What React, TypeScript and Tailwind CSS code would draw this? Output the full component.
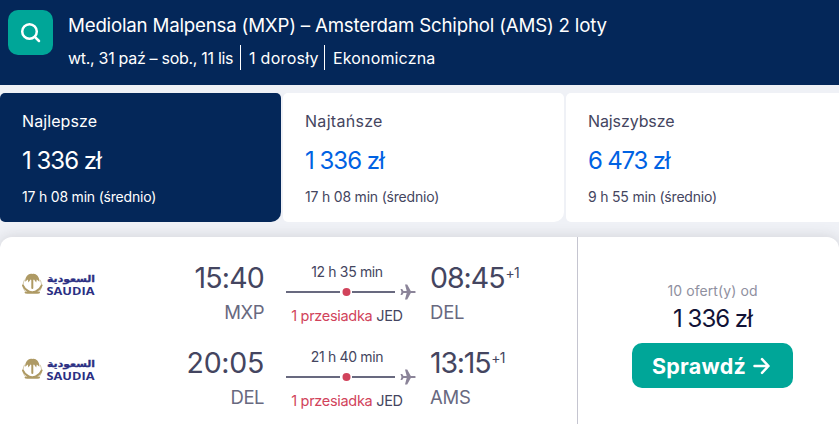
import React from "react";

type Tab = {
  label: string;
  price: string;
  duration: string;
  active?: boolean;
  labelClass: string;
  priceClass: string;
};

const tabs: Tab[] = [
  { label: "Najlepsze", price: "1 336 zł", duration: "17 h 08 min (średnio)", active: true, labelClass: "tracking-[0.1px]", priceClass: "tracking-[-1px]" },
  { label: "Najtańsze", price: "1 336 zł", duration: "17 h 08 min (średnio)", labelClass: "tracking-[0.3px]", priceClass: "tracking-[-1px]" },
  { label: "Najszybsze", price: "6 473 zł", duration: "9 h 55 min (średnio)", labelClass: "tracking-[-0.1px]", priceClass: "tracking-[-1.2px]" },
];

const legs = [
  { from: "MXP", to: "DEL", depart: "15:40", arrive: "08:45", duration: "12 h 35 min", departClass: "tracking-[-0.8px]", arriveClass: "tracking-[-1px]" },
  { from: "DEL", to: "AMS", depart: "20:05", arrive: "13:15", duration: "21 h 40 min", departClass: "tracking-[-0.3px]", arriveClass: "tracking-[-1.2px]" },
];

function SaudiaLogo() {
  return (
    <svg width="76" height="26" viewBox="0 0 76 26" className="block">
      <g fill="none" stroke="#ae9a64" strokeLinecap="round">
        <path d="M2.500 8C.5 11.500.5 16 3 19M18.100 8C20.100 11.500 20.100 16 17.600 19" strokeWidth="0.900" opacity="0.6" />
        <path d="M1 13.500C3 18.500 9 22 17 20.500M19.600 13.500C17.600 18.500 11.600 22 3.600 20.500" strokeWidth="2" />
        <path d="M10.300 8v8" strokeWidth="2" />
      </g>
      <path d="M10.300 2C13 .8 17.500 3.500 17.400 9.800L14.800 7.500 14.200 10.500 12 7.500 10.300 8.600 8.600 7.500 6.400 10.500 5.800 7.500 3.200 9.800C3.100 3.500 7.600.8 10.300 2Z" fill="#ae9a64" />
      <g fill="#2b2f83" fontWeight="700">
        <text x="25" y="9.500" fontSize="9.500" textLength="48" lengthAdjust="spacingAndGlyphs" fontFamily="'DejaVu Sans', sans-serif" direction="ltr" stroke="#2b2f83" strokeWidth="0.300">السعودية</text>
        <text x="24.500" y="22.500" fontSize="11" textLength="48" lengthAdjust="spacingAndGlyphs" fontFamily="'Open Sans', sans-serif">SAUDIA</text>
      </g>
    </svg>
  );
}

function Plane() {
  return (
    <svg width="16" height="16" viewBox="0 0 16 16" fill="#8b8499" className="block">
      <path d="M15.700 8c0 .6-.5 1.100-1.200 1.100h-3.700L7.200 15.400H5L6.700 9.100H3.500L2.200 10.900H.5L1.500 8 .5 5.100H2.200L3.500 6.900H6.700L5 .6H7.200L10.800 6.900h3.700c.7 0 1.200.5 1.200 1.100z" />
    </svg>
  );
}

function Leg({ leg }: { leg: (typeof legs)[number] }) {
  return (
    <div className="flex h-[85px]">
      <div className="w-[76px] pt-[11px]"><SaudiaLogo /></div>
      <div className="flex w-[166px] flex-col items-end">
        <span className={`text-[28.5px] leading-[34px] text-[#444560] ${leg.departClass}`}>{leg.depart}</span>
        <span className="mt-[4px] text-[18.5px] leading-[26px] tracking-[-0.5px] text-[#68697f]">{leg.from}</span>
      </div>
      <div className="ml-[22px] flex w-[130px] flex-col">
        <span className="w-[122px] pt-[1px] text-center text-[14px] leading-[20px] tracking-[-0.35px] text-[#444560]">{leg.duration}</span>
        <div className="mt-[2px] flex h-[16px] items-center">
          <span className="h-[2px] w-[55px] bg-[#68697f]" />
          <span className="mx-[2px] flex w-[8px] justify-center"><span className="size-[8px] shrink-0 translate-x-[0.5px] rounded-full bg-[#d1435b]" /></span>
          <span className="h-[2px] w-[43px] bg-[#68697f]" />
          <span className="ml-[5px]"><Plane /></span>
        </div>
        <span className="mt-[6px] w-[122px] whitespace-nowrap text-center text-[14.5px] leading-[20px] tracking-[-0.3px] text-[#444560]">
          <span className="text-[#d1435b]">1 przesiadka</span> JED
        </span>
      </div>
      <div className="ml-[14px] flex flex-col">
        <span className={`flex text-[28.5px] leading-[34px] text-[#444560] ${leg.arriveClass}`}>
          {leg.arrive}
          <span className="pl-[1px] pt-[2px] text-[14px] leading-[20px] tracking-[-0.9px]">+1</span>
        </span>
        <span className="mt-[4px] text-[18.5px] leading-[26px] tracking-[-0.2px] text-[#68697f]">{leg.to}</span>
      </div>
    </div>
  );
}

export default function App() {
  return (
    <div className="h-[424px] w-[839px] overflow-hidden bg-[#eff1f6] font-['Inter',sans-serif]">
      <header className="flex h-[85px] bg-[#042759] pl-[8px] text-white">
        <button className="mt-[10px] flex size-[45px] shrink-0 items-center justify-center rounded-[10px] bg-[#00a698]">
          <svg width="22" height="22" viewBox="0 0 22 22" fill="none" stroke="currentColor" strokeWidth="2.500" strokeLinecap="round">
            <circle cx="9.500" cy="9.500" r="7.300" />
            <path d="M14.800 14.800 19 19" />
          </svg>
        </button>
        <div className="ml-[15px] flex flex-col items-start whitespace-nowrap">
          <h1 className="mt-[13px] text-[18.7px] leading-[26px] tracking-[-0.2px]">Mediolan Malpensa (MXP) – Amsterdam Schiphol (AMS) 2 loty</h1>
          <div className="mt-[6px] flex h-[25px] text-[16px] leading-[27px]">
            <span className="w-[173px] border-r border-white tracking-[-0.3px]">wt., 31 paź – sob., 11 lis</span>
            <span className="w-[84px] border-r border-white pl-[8px] tracking-[0.3px]">1 dorosły</span>
            <span className="pl-[8px] tracking-[0.15px]">Ekonomiczna</span>
          </div>
        </div>
      </header>

      <div className="mt-[8px] flex h-[129px] gap-[2px]">
        {tabs.map((tab) => (
          <section
            key={tab.label}
            className={`flex w-[281px] shrink-0 flex-col items-start whitespace-nowrap rounded-[5px] rounded-br-[10px] pl-[22px] pt-[16px] ${tab.active ? "bg-[#042759] text-white" : "bg-white text-[#444560]"}`}
          >
            <span className={`text-[16px] leading-[24px] ${tab.labelClass}`}>{tab.label}</span>
            <span className={`mt-[12px] text-[24px] leading-[32px] ${tab.priceClass} ${tab.active ? "text-white" : "text-[#0062e3]"}`}>{tab.price}</span>
            <span className="mt-[10px] text-[14px] leading-[20px] tracking-[-0.2px]">{tab.duration}</span>
          </section>
        ))}
      </div>

      <main className="mt-[15px] flex h-[200px] rounded-t-[12px] bg-white shadow-[0_0_14px_rgba(37,32,31,0.15)]">
        <div className="w-[578px] border-r border-[#c5c5d0] pl-[22px] pt-[24px]">
          {legs.map((leg) => <Leg key={leg.depart} leg={leg} />)}
        </div>
        <aside className="flex flex-1 flex-col items-center pl-[8px] pt-[44px]">
          <span className="text-[14px] leading-[20px] tracking-[0.1px] text-[#8f90a0]">10 ofert(y) od</span>
          <span className="mt-[2px] text-[24px] leading-[32px] tracking-[-1px] text-[#111236]">1 336 zł</span>
          <button className="mt-[8px] flex h-[45px] w-[161px] items-center justify-center rounded-[10px] bg-[#00a698] pr-[2px] text-[21.5px] font-bold tracking-[0.2px] text-white">
            <span className="pt-[1px]">Sprawdź</span>
            <svg width="18" height="18" viewBox="0 0 18 18" fill="none" stroke="currentColor" strokeWidth="2.500" strokeLinecap="round" strokeLinejoin="round" className="ml-[7px]">
              <path d="M1.500 9h14M9 2.200 15.500 9 9 15.800" />
            </svg>
          </button>
        </aside>
      </main>
    </div>
  );
}
